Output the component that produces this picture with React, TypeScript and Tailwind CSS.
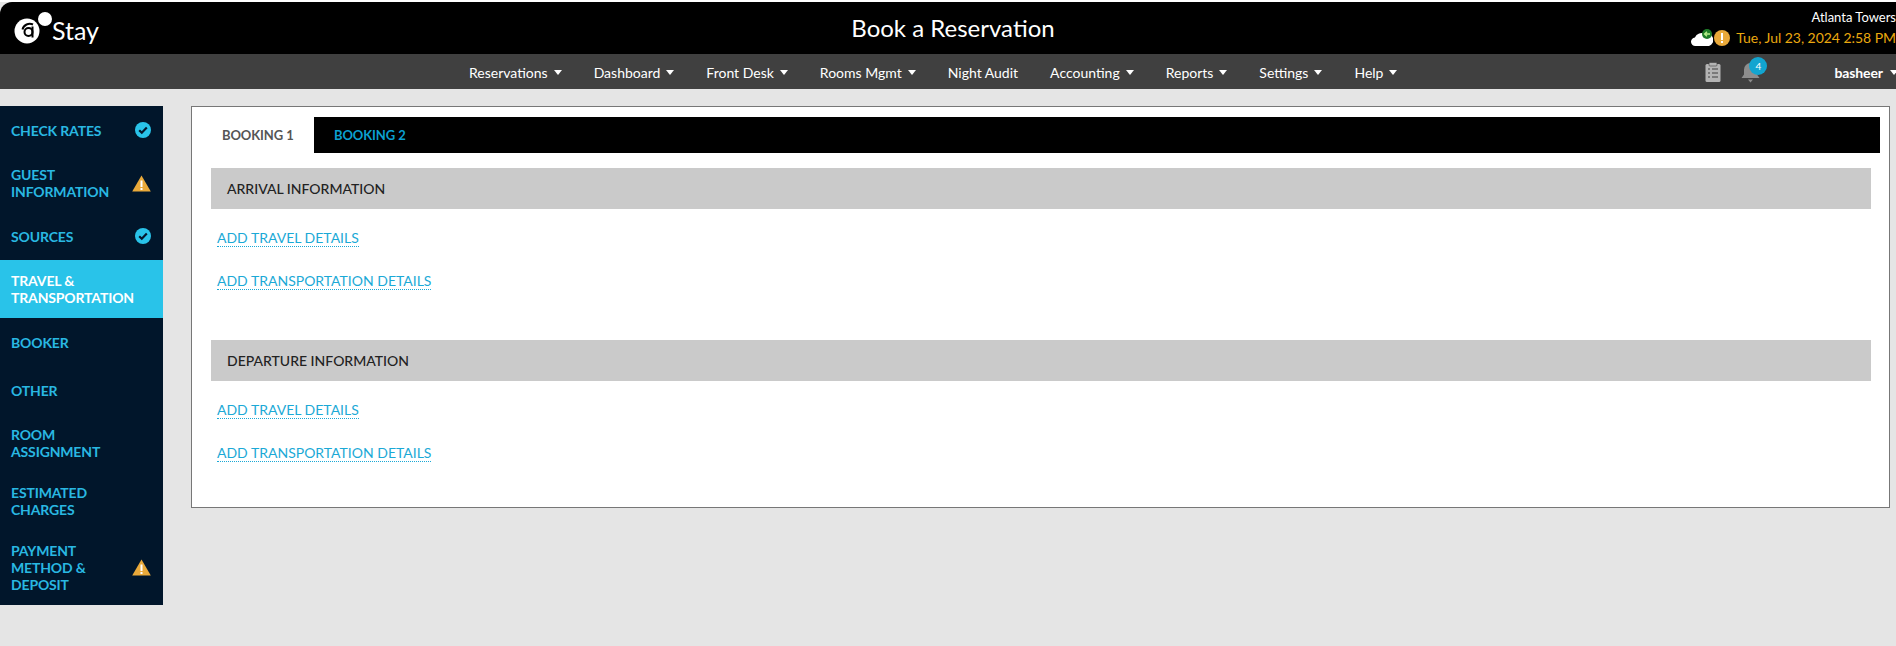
const lato = { fontFamily: 'Lato, sans-serif' }

function Caret() {
    return <span className="ml-[6px] inline-block w-0 h-0 border-x-[4px] border-x-transparent border-t-[5px] border-t-white" />
}

function CheckBadge() {
    return (
        <svg width="16" height="16" viewBox="0 0 16 16" className="shrink-0">
            <circle cx="8" cy="8" r="8" fill="#29c3e9" />
            <path d="M4.2 8.2l2.6 2.6 5-5.2" fill="none" stroke="#05162b" strokeWidth="2.2" />
        </svg>
    )
}

function WarnBadge() {
    return (
        <svg width="19" height="17" viewBox="0 0 19 17" className="shrink-0">
            <path d="M9.5 0.5L18.8 16.5H0.2z" fill="#e9a93a" />
            <rect x="8.5" y="5.5" width="2" height="6.5" fill="#fff" />
            <rect x="8.5" y="13" width="2" height="2" fill="#fff" />
        </svg>
    )
}

const steps: { lines: string[]; badge?: 'ok' | 'warn'; active?: boolean; h: string }[] = [
    { lines: ['CHECK RATES'], badge: 'ok', h: 'h-[48px]' },
    { lines: ['GUEST', 'INFORMATION'], badge: 'warn', h: 'h-[58px]' },
    { lines: ['SOURCES'], badge: 'ok', h: 'h-[48px]' },
    { lines: ['TRAVEL &', 'TRANSPORTATION'], active: true, h: 'h-[58px]' },
    { lines: ['BOOKER'], h: 'h-[48px]' },
    { lines: ['OTHER'], h: 'h-[48px]' },
    { lines: ['ROOM', 'ASSIGNMENT'], h: 'h-[58px]' },
    { lines: ['ESTIMATED', 'CHARGES'], h: 'h-[58px]' },
    { lines: ['PAYMENT', 'METHOD &', 'DEPOSIT'], badge: 'warn', h: 'h-[75px]' },
]

const menu = [
    { label: 'Reservations', caret: true },
    { label: 'Dashboard', caret: true },
    { label: 'Front Desk', caret: true },
    { label: 'Rooms Mgmt', caret: true },
    { label: 'Night Audit', caret: false },
    { label: 'Accounting', caret: true },
    { label: 'Reports', caret: true },
    { label: 'Settings', caret: true },
    { label: 'Help', caret: true },
]

function Section({ title }: { title: string }) {
    return (
        <div>
            <div className="h-[41px] bg-[#cacaca] pl-[16px] flex items-center text-[14px] font-medium text-[#222]">{title}</div>
            <div className="pl-[6px] pt-[20px] flex flex-col gap-[25px] text-[14px] leading-[17px] text-[#1ba9d6]">
                <div><a className="border-b border-dotted border-[#1ba9d6] inline-block leading-[16px]">ADD TRAVEL DETAILS</a></div>
                <div><a className="border-b border-dotted border-[#1ba9d6] inline-block leading-[16px]">ADD TRANSPORTATION DETAILS</a></div>
            </div>
        </div>
    )
}

export default function App() {
    return (
        <div className="h-[646px] w-[1896px] overflow-hidden bg-[#e5e5e5] flex flex-col" style={lato}>
            <div className="h-[2px] bg-white shrink-0" />
            {/* Top bar */}
            <div className="h-[52px] shrink-0 bg-black rounded-tl-[12px] grid grid-cols-[1fr_1fr_1fr] items-center text-white">
                <div className="flex items-center pl-[14px]">
                    <svg width="40" height="34" viewBox="0 0 40 34" className="shrink-0">
                        <circle cx="13" cy="20" r="12.5" fill="#fff" />
                        <circle cx="31" cy="8" r="8.5" fill="#000" />
                        <circle cx="31" cy="8" r="7" fill="#fff" />
                        <path d="M19 13.5a7.5 7.5 0 0 0-10.5 5" fill="none" stroke="#000" strokeWidth="2" />
                        <circle cx="14.5" cy="21" r="4" fill="none" stroke="#000" strokeWidth="2" />
                        <path d="M18.5 15.5v11" fill="none" stroke="#000" strokeWidth="2" />
                    </svg>
                    <span className="ml-[-2px] mt-[4px] text-[25px] leading-none">Stay</span>
                </div>
                <div className="text-center text-[24px] leading-none pl-[10px] whitespace-nowrap">Book a Reservation</div>
                <div className="flex flex-col items-end">
                    <div className="text-[13px] leading-[17px] mt-[1px]">Atlanta Towers</div>
                    <div className="flex items-center mt-[2px]">
                        <svg width="22" height="20" viewBox="0 0 22 20" className="shrink-0">
                            <path d="M4.5 18a4.2 4.2 0 0 1-.6-8.4A7 7 0 0 1 14 6a5 5 0 0 1 4 12z" fill="#fff" />
                            <circle cx="16" cy="6" r="5" fill="#1d7d28" />
                            <path d="M19 6h-5M16 3.8L13.6 6 16 8.2" fill="none" stroke="#b6f08a" strokeWidth="1.4" />
                        </svg>
                        <svg width="16" height="16" viewBox="0 0 16 16" className="shrink-0 ml-[1px]">
                            <circle cx="8" cy="8" r="8" fill="#e9a93a" />
                            <rect x="7" y="3" width="2" height="7" fill="#fff" />
                            <rect x="7" y="11" width="2" height="2" fill="#fff" />
                        </svg>
                        <span className="ml-[6px] text-[14px] leading-[18px] tracking-[-0.04px] text-[#eba90f] whitespace-nowrap">Tue, Jul 23, 2024 2:58 PM</span>
                    </div>
                </div>
            </div>
            {/* Menu bar */}
            <div className="h-[35px] shrink-0 bg-[#404040] flex items-center text-white text-[14px] pt-[1px]">
                <div className="ml-[469px] flex items-center gap-[32px]">
                    {menu.map((m) => (
                        <span key={m.label} className="flex items-center whitespace-nowrap">
                            {m.label}
                            {m.caret && <Caret />}
                        </span>
                    ))}
                </div>
                <div className="ml-auto flex items-center mr-[-3px]">
                    <svg width="16" height="20" viewBox="0 0 16 20" className="shrink-0">
                        <rect x="0.5" y="2" width="15" height="18" rx="1.5" fill="#b4b4b4" />
                        <rect x="4" y="0.5" width="8" height="3.5" rx="1" fill="#b4b4b4" stroke="#404040" strokeWidth="0.6" />
                        <path d="M3 7h2M3 11h2M3 15h2M7 7h6M7 11h6M7 15h6" stroke="#404040" strokeWidth="1.2" />
                    </svg>
                    <div className="relative ml-[20px] mr-[74px]">
                        <svg width="19" height="21" viewBox="0 0 19 21" className="shrink-0">
                            <path d="M9.5 1a6.5 6.5 0 0 0-6.5 6.5v5L0.5 16h18L16 12.5v-5A6.5 6.5 0 0 0 9.5 1z" fill="#8d8d8d" />
                            <path d="M7 17.5h5L9.5 20.5z" fill="#8d8d8d" />
                        </svg>
                        <span className="absolute -top-[5px] left-[8px] w-[18px] h-[18px] rounded-full bg-[#12a5d0] flex items-center justify-center text-[10px] leading-none">4</span>
                    </div>
                    <span className="font-bold text-[14px] tracking-[-0.1px] whitespace-nowrap">basheer</span>
                    <span className="ml-[7px] mr-[1px]"><span className="block w-0 h-0 border-x-[4px] border-x-transparent border-t-[5px] border-t-white" /></span>
                </div>
            </div>
            {/* Body */}
            <div className="flex items-start pt-[17px]">
                <div className="w-[163px] shrink-0 bg-[#01162b] flex flex-col font-bold text-[14px] leading-[17px] tracking-[-0.15px]">
                    {steps.map((s) => (
                        <div
                            key={s.lines[0]}
                            className={`${s.h} pl-[11px] pr-[12px] flex items-center justify-between ${s.active ? 'bg-[#29c3e9] text-white' : 'text-[#29b8e2]'}`}
                        >
                            <div>
                                {s.lines.map((l) => <div key={l}>{l}</div>)}
                            </div>
                            {s.badge === 'ok' && <CheckBadge />}
                            {s.badge === 'warn' && <WarnBadge />}
                        </div>
                    ))}
                </div>
                <div className="ml-[28px] w-[1699px] h-[402px] bg-white border border-[#777] pt-[10px] pl-[19px] pr-[9px]">
                    <div className="flex h-[36px] text-[13px] font-bold tracking-[-0.1px]">
                        <div className="w-[103px] flex items-center pl-[11px] pt-[2px] text-[#555]">BOOKING 1</div>
                        <div className="flex-1 bg-black flex items-center pl-[20px] pt-[2px] text-[#0b9fd0]">BOOKING 2</div>
                    </div>
                    <div className="mt-[15px] mr-[9px] flex flex-col gap-[50px]">
                        <Section title="ARRIVAL INFORMATION" />
                        <Section title="DEPARTURE INFORMATION" />
                    </div>
                </div>
            </div>
        </div>
    )
}
